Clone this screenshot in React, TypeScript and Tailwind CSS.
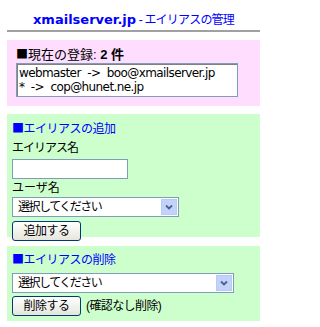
import React from "react";

const jp = "font-['Liberation_Sans','Noto_Sans_CJK_JP',sans-serif]";
const sq = "font-['Noto_Sans_CJK_JP',sans-serif]";

function Select({ w }: { w: string }) {
  return (
    <div className={`${w} h-[20px] border border-[#7f9db9] bg-white flex items-center justify-between pl-[5px] pr-[1px]`}>
      <span className="text-[12px] leading-none text-black tracking-[-1.5px]">選択してください</span>
      <div className="w-[16px] h-[16px] bg-[#c1d3fb] border border-[#b8caf5] flex items-center justify-center">
        <svg width="8" height="6" viewBox="0 0 8 6">
          <path d="M1 1.5 L4 4.5 L7 1.5" stroke="#4d6185" strokeWidth="1.8" fill="none" />
        </svg>
      </div>
    </div>
  );
}

function Btn({ children }: { children: React.ReactNode }) {
  return (
    <div className="w-[69px] h-[20px] rounded-[3px] border border-[#003c74] bg-gradient-to-b from-white to-[#e6e5dc] flex items-center justify-center text-[12px] leading-none text-black tracking-[-0.5px]">
      {children}
    </div>
  );
}

export default function App() {
  return (
    <div className={`w-[267px] h-[327px] bg-white ${jp} text-black`}>
      <div className="pt-[11px] text-center leading-none text-[#0000ff] h-[30px]">
        <span className="font-['DejaVu_Sans',sans-serif] font-bold text-[13px]">xmailserver.jp</span>
        <span className="text-[12px] tracking-[-0.8px]"> - エイリアスの管理</span>
      </div>
      <div className="mx-[7px] h-[2px] bg-[#a0a0a0]" />
      <div className="mx-[7px] mt-[8px] bg-[#ffddff] h-[66px] pl-[9px] pt-[6px]">
        <div className="text-[13px] leading-[15px]">
          <span className={`${sq} text-[12px]`}>■</span>現在の登録: <b>2 件</b>
        </div>
        <div className="mt-[1px] w-[222px] h-[34px] border border-[#7f9db9] bg-white">
          <div className="h-full border-t border-l border-[#808080] pl-[1px] pt-[1px] text-[12px] leading-[14px] font-['DejaVu_Sans','Noto_Sans_CJK_JP',sans-serif] tracking-[-0.6px]">
            <div className="whitespace-pre">webmaster  -&gt;  boo@xmailserver.jp</div>
            <div className="whitespace-pre">*  -&gt;  cop@hunet.ne.jp</div>
          </div>
        </div>
      </div>
      <div className="mx-[7px] mt-[8px] bg-[#ccffcc] h-[123px] pl-[5px] pt-[6px]">
        <div className="text-[12px] leading-[16px] text-[#0000ff] tracking-[-0.5px]">
          <span className={`${sq} text-[12px]`}>■</span>エイリアスの追加
        </div>
        <div className="mt-[4px] text-[12px] leading-[15px] tracking-[-1px]">エイリアス名</div>
        <div className="mt-[3px] w-[116px] h-[20px] border border-[#7f9db9] bg-white" />
        <div className="mt-[2px] text-[12px] leading-[15px]">ユーザ名</div>
        <div className="mt-[1px]">
          <Select w="w-[167px]" />
        </div>
        <div className="mt-[4px]">
          <Btn>追加する</Btn>
        </div>
      </div>
      <div className="mx-[7px] mt-[9px] bg-[#ccffcc] h-[75px] pl-[5px] pt-[5px]">
        <div className="text-[12px] leading-[16px] text-[#0000ff] tracking-[-0.5px]">
          <span className={`${sq} text-[12px]`}>■</span>エイリアスの削除
        </div>
        <div className="mt-[5px]">
          <Select w="w-[222px]" />
        </div>
        <div className="mt-[3px] flex items-center gap-[5px]">
          <Btn>削除する</Btn>
          <span className="text-[12px] tracking-[-0.6px]">(確認なし削除)</span>
        </div>
      </div>
    </div>
  );
}
